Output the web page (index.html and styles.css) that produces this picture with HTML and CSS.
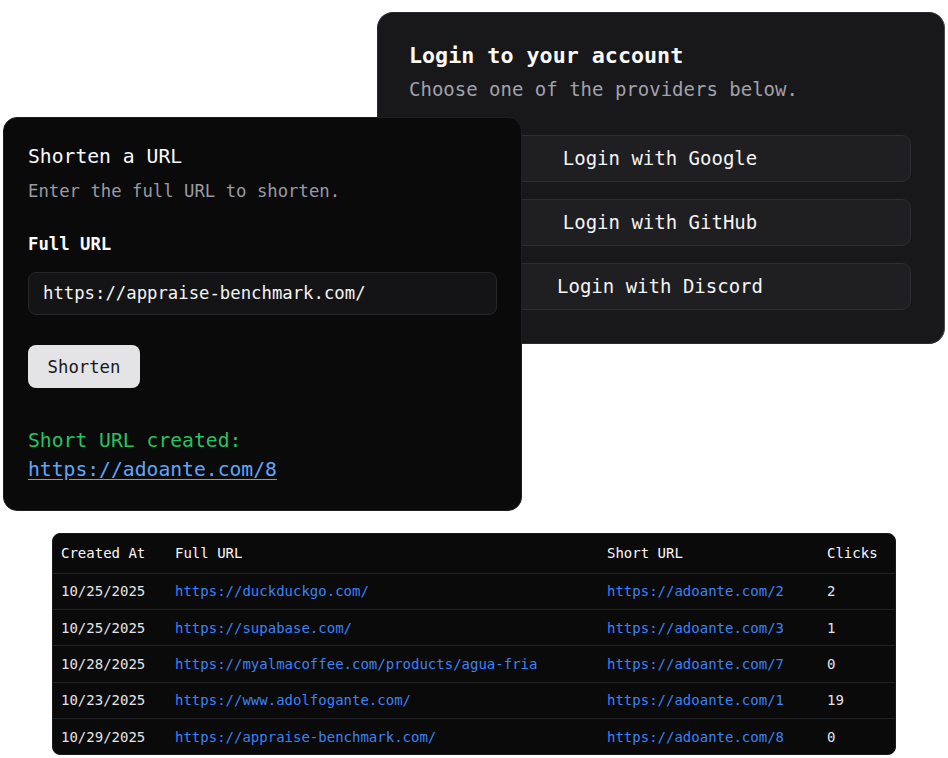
FILE: index.html
```html
<!DOCTYPE html>
<html lang="en">
<head>
<meta charset="utf-8">
<title>URL Shortener</title>
<link rel="stylesheet" href="styles.css">
</head>
<body>
<div class="canvas">
  <section class="card login">
    <h2 class="login-title">Login to your account</h2>
    <p class="login-desc">Choose one of the providers below.</p>
    <div class="providers">
      <button class="provider">Login with Google</button>
      <button class="provider">Login with GitHub</button>
      <button class="provider">Login with Discord</button>
    </div>
  </section>

  <section class="card shorten">
    <h2 class="shorten-title">Shorten a URL</h2>
    <p class="shorten-desc">Enter the full URL to shorten.</p>
    <label class="field-label">Full URL</label>
    <div class="input">https://appraise-benchmark.com/</div>
    <button class="primary">Shorten</button>
    <div class="result">
      <span class="result-text">Short URL created:</span>
      <a class="result-link" href="#">https://adoante.com/8</a>
    </div>
  </section>

  <section class="card links">
    <table class="table">
      <thead>
        <tr><th class="c1">Created At</th><th class="c2">Full URL</th><th class="c3">Short URL</th><th class="c4">Clicks</th></tr>
      </thead>
      <tbody>
        <tr><td>10/25/2025</td><td class="lnk">https://duckduckgo.com/</td><td class="lnk">https://adoante.com/2</td><td>2</td></tr>
        <tr><td>10/25/2025</td><td class="lnk">https://supabase.com/</td><td class="lnk">https://adoante.com/3</td><td>1</td></tr>
        <tr><td>10/28/2025</td><td class="lnk">https://myalmacoffee.com/products/agua-fria</td><td class="lnk">https://adoante.com/7</td><td>0</td></tr>
        <tr><td>10/23/2025</td><td class="lnk">https://www.adolfogante.com/</td><td class="lnk">https://adoante.com/1</td><td>19</td></tr>
        <tr><td>10/29/2025</td><td class="lnk">https://appraise-benchmark.com/</td><td class="lnk">https://adoante.com/8</td><td>0</td></tr>
      </tbody>
    </table>
  </section>
</div>
</body>
</html>
```
FILE: styles.css
```css
* { box-sizing: border-box; }
html, body { margin: 0; padding: 0; background: #ffffff; }
body {
  font-family: "DejaVu Sans Mono", "Liberation Mono", monospace;
  color: #f4f4f5;
}
.canvas {
  position: relative;
  width: 948px;
  height: 758px;
  overflow: hidden;
}
.card {
  position: absolute;
  display: flex;
  flex-direction: column;
}
h2, p { margin: 0; }

/* Login card */
.login {
  left: 377px;
  top: 12px;
  width: 568px;
  height: 332px;
  background: #18181b;
  border: 1px solid #2c2c30;
  border-right-color: #4a4a4e;
  border-radius: 16px;
  padding: 29px 33px 32px 31px;
}
.login-title {
  font-size: 21.7px;
  line-height: 28px;
  font-weight: bold;
  color: #fafafa;
}
.login-desc {
  margin-top: 6px;
  font-size: 19px;
  line-height: 26px;
  color: #a1a1aa;
}
.providers {
  margin-top: 33px;
  display: flex;
  flex-direction: column;
  gap: 17px;
}
.provider {
  height: 47px;
  width: 502px;
  background: #1f1f22;
  border: 1px solid #2f2f33;
  border-radius: 9px;
  color: #f4f4f5;
  font-family: inherit;
  font-size: 19px;
  padding: 0 0 2px 0;
}

/* Shorten card */
.shorten {
  left: 3px;
  top: 117px;
  width: 519px;
  height: 394px;
  background: #0a0a0b;
  border: 1px solid #1e1e21;
  border-radius: 14px;
  padding: 26px 24px 24px 24px;
}
.shorten-title {
  font-size: 19.7px;
  line-height: 26px;
  font-weight: normal;
  color: #fafafa;
}
.shorten-desc {
  margin-top: 9px;
  font-size: 17.3px;
  line-height: 24px;
  color: #9a9aa2;
}
.field-label {
  margin-top: 29px;
  font-size: 17.3px;
  line-height: 24px;
  font-weight: bold;
  color: #fafafa;
}
.input {
  margin-top: 16px;
  width: 469px;
  height: 43px;
  border: 1px solid #27272a;
  background: #141416;
  border-radius: 8px;
  padding: 0 14px;
  font-size: 17.3px;
  line-height: 41px;
  color: #f4f4f5;
}
.primary {
  margin-top: 30px;
  align-self: flex-start;
  width: 112px;
  height: 43px;
  background: #e4e4e7;
  border: none;
  border-radius: 8px;
  color: #18181b;
  font-family: inherit;
  font-size: 17.3px;
  padding: 0;
}
.result {
  margin-top: 38px;
  display: flex;
  flex-direction: column;
  font-size: 19.7px;
  line-height: 29px;
}
.result-text { color: #22c55e; }
.result-link {
  color: #60a5fa;
  text-decoration: underline;
  text-underline-offset: 3px;
  align-self: flex-start;
}

/* Table card */
.links {
  left: 52px;
  top: 533px;
  width: 844px;
  height: 222px;
  background: #0a0a0b;
  border-radius: 8px;
  overflow: hidden;
  border: 1px solid #1a1a1d;
}
.table {
  width: 100%;
  border-collapse: collapse;
  table-layout: fixed;
  font-size: 14px;
}
.table th {
  height: 39px;
  text-align: left;
  font-weight: normal;
  color: #fafafa;
  padding: 0 0 0 8px;
  border-bottom: 1px solid #232326;
}
.table td {
  height: 36.4px;
  padding: 0 0 0 8px;
  color: #e4e4e7;
  border-bottom: 1px solid #232326;
  white-space: nowrap;
}
.table tbody tr:last-child td { border-bottom: none; }
.table .lnk { color: #3b82f6; }
.c1 { width: 114px; }
.c2 { width: 432px; }
.c3 { width: 220px; }
```
